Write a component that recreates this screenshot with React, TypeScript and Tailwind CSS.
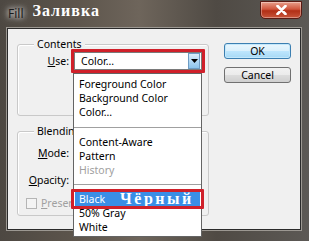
import React from "react";

const Item = ({ children, className = "" }: { children: React.ReactNode; className?: string }) => (
  <div className={`h-[14px] leading-[14px] pl-[5px] whitespace-nowrap ${className}`}>{children}</div>
);

export default function App() {
  return (
    <div className="relative w-[309px] h-[241px] overflow-hidden flex flex-col bg-[linear-gradient(90deg,#4d4842_0%,#5d554c_25%,#6e655b_45%,#4f4a44_70%,#5c5955_100%)] font-['Noto_Sans',sans-serif] text-[10.5px] text-black">
      {/* title bar */}
      <div className="relative h-[28px] shrink-0 flex items-start">
        <span className="ml-[8px] mt-[5px] text-[12px] leading-[18px] text-[#1a1a1a] [text-shadow:0_0_5px_#ffffff,0_0_8px_#ffffff]">Fill</span>
        <span className="ml-[9px] mt-[2px] font-['Liberation_Serif',serif] font-bold text-[16px] leading-[18px] tracking-[1px] text-white">Заливка</span>
        <div className="absolute left-[260px] top-[1px] w-[42px] h-[18px] rounded-b-[5px] border border-[#5a1a12] bg-[linear-gradient(180deg,#e8a08c_0%,#d0553c_45%,#b22f16_55%,#c8553a_100%)] flex items-center justify-center shadow-[inset_0_0_0_1px_rgba(255,255,255,0.35)]">
          <svg width="11" height="10" viewBox="0 0 11 10">
            <path d="M1.5 1 L9.5 9 M9.5 1 L1.5 9" stroke="#ffffff" strokeWidth="2.6" strokeLinecap="round" />
          </svg>
        </div>
      </div>

      {/* client */}
      <div className="ml-[7px] mr-[8px] h-[202px] shrink-0 border border-[#2a2a2a] shadow-[0_0_0_1px_#9c9892] bg-[#f0f0f0] flex pl-[9px] pt-[15px]">
        {/* left column */}
        <div className="w-[192px] flex flex-col">
          <div className="relative h-[72px] border border-[#c9c9c9] rounded-[3px] shadow-[inset_1px_1px_0_#ffffff]">
            <span className="absolute left-[16px] -top-[9px] px-[3px] bg-[#f0f0f0] leading-[16px]">Contents</span>
            <div className="flex items-center mt-[7px]">
              <span className="w-[51px] text-right leading-[16px]"><span className="underline">U</span>se:</span>
              <div className="relative ml-[5px] w-[128px] h-[18px] bg-white border border-[#7a7a7a] flex items-center">
                <span className="pl-[6px] flex-1 leading-[16px]">Color...</span>
                <div className="w-[12px] h-[16px] mr-[1px] border border-[#6e9cc4] bg-[linear-gradient(180deg,#dbeefb_0%,#b2d8f4_50%,#8cc4ec_100%)] flex items-center justify-center">
                  <svg width="7" height="4" viewBox="0 0 7 4"><path d="M0 0 L7 0 L3.5 4 Z" fill="#000" /></svg>
                </div>
                <div className="absolute -left-[4px] -top-[4px] -right-[4px] -bottom-[4px] border-[3px] border-[#d0202a] rounded-[1px]" />
              </div>
            </div>
          </div>
          <div className="relative mt-[15px] h-[85px] border border-[#c9c9c9] rounded-[3px] shadow-[inset_1px_1px_0_#ffffff]">
            <span className="absolute left-[16px] -top-[9px] px-[3px] bg-[#f0f0f0] leading-[16px]">Blending</span>
            <div className="flex flex-col">
              <span className="w-[51px] text-right leading-[16px] mt-[13px]"><span className="underline">M</span>ode:</span>
              <span className="w-[51px] text-right leading-[16px] mt-[11px]"><span className="underline">O</span>pacity:</span>
              <div className="flex items-center mt-[8px] ml-[8px]">
                <div className="w-[11px] h-[11px] border border-[#b5b5b5] bg-[#f4f4f4]" />
                <span className="ml-[4px] text-[#a0a0a0] leading-[14px]"><span className="underline">P</span>reserve Transparency</span>
              </div>
            </div>
          </div>
        </div>
        {/* right column */}
        <div className="ml-[15px] mt-[-1px] w-[67px] flex flex-col">
          <div className="h-[16px] rounded-[3px] border border-[#3c7fb1] bg-[linear-gradient(180deg,#eaf6fd_0%,#d9f0fc_50%,#bee6fd_50%,#a7d9f5_100%)] shadow-[inset_0_0_0_1px_#c4e8fb] flex items-center justify-center leading-[14px]">OK</div>
          <div className="mt-[8px] h-[16px] rounded-[3px] border border-[#707070] bg-[linear-gradient(180deg,#f2f2f2_0%,#ebebeb_50%,#dddddd_50%,#cfcfcf_100%)] flex items-center justify-center leading-[14px]">Cancel</div>
        </div>
      </div>

      {/* dropdown list overlay */}
      <div className="absolute left-[73px] top-[73px] w-[129px] h-[164px] bg-white border border-[#646464] pt-[3px]">
        <Item>Foreground Color</Item>
        <Item>Background Color</Item>
        <Item>Color...</Item>
        <div className="h-[16px] flex items-center"><div className="w-full h-px bg-[#a0a0a0]" /></div>
        <Item>Content-Aware</Item>
        <Item>Pattern</Item>
        <Item className="text-[#a0a0a0]">History</Item>
        <div className="h-[15px] flex items-center"><div className="w-full h-px bg-[#a0a0a0]" /></div>
        <div className="relative mx-[1px]">
          <div className="h-[14px] bg-[#3a8ee6] text-white flex items-center pl-[4px] whitespace-nowrap">
            <span className="leading-[14px]">Black</span>
            <span className="ml-[15px] font-['Liberation_Serif',serif] font-bold text-[16px] leading-[14px] tracking-[2.5px]">Чёрный</span>
          </div>
          <div className="absolute -left-[4px] -top-[3px] -right-[4px] -bottom-[3px] border-[3px] border-[#d0202a] rounded-[1px]" />
        </div>
        <Item>50% Gray</Item>
        <Item>White</Item>
      </div>
    </div>
  );
}
